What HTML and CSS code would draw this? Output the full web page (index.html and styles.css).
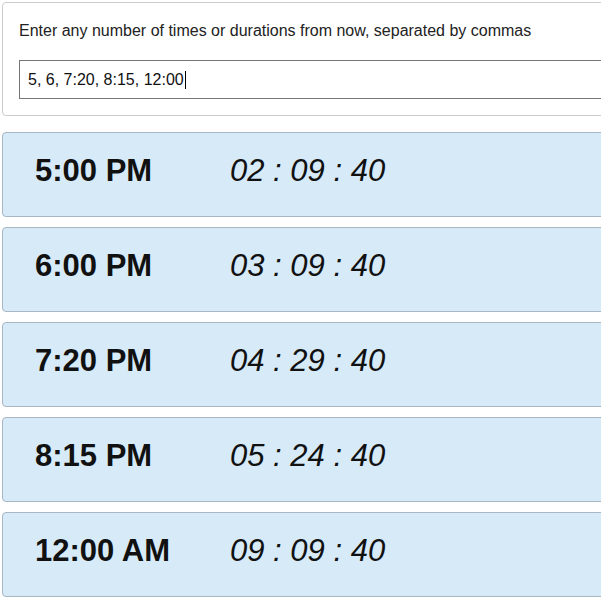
FILE: index.html
```html
<!DOCTYPE html>
<html>
<head>
<meta charset="utf-8">
<link rel="stylesheet" href="styles.css">
</head>
<body>
<div class="page">
  <div class="panel">
    <div class="label">Enter any number of times or durations from now, separated by commas</div>
    <div class="input"><span>5, 6, 7:20, 8:15, 12:00</span><span class="caret"></span></div>
  </div>
  <div class="list">
    <div class="card"><div class="time">5:00 PM</div><div class="dur">02 : 09 : 40</div></div>
    <div class="card"><div class="time">6:00 PM</div><div class="dur">03 : 09 : 40</div></div>
    <div class="card"><div class="time">7:20 PM</div><div class="dur">04 : 29 : 40</div></div>
    <div class="card"><div class="time">8:15 PM</div><div class="dur">05 : 24 : 40</div></div>
    <div class="card"><div class="time">12:00 AM</div><div class="dur">09 : 09 : 40</div></div>
  </div>
</div>
</body>
</html>
```

FILE: styles.css
```css
html, body {
  margin: 0;
  padding: 0;
  overflow: hidden;
  background: #ffffff;
}
body {
  font-family: "Liberation Sans", Arial, sans-serif;
  color: #1a1a1a;
}
.page {
  padding: 2px;
  width: 640px;
}
.panel {
  border: 1px solid #cccccc;
  border-radius: 4px;
  padding: 16px 16px 16px 16px;
}
.label {
  font-size: 16px;
  line-height: 24px;
  margin-bottom: 17px;
  color: #222;
}
.input {
  height: 39px;
  box-sizing: border-box;
  border: 1px solid #767676;
  display: flex;
  align-items: center;
  padding-left: 8px;
  font-size: 16px;
  color: #111;
  background: #fff;
}
.caret {
  display: inline-block;
  width: 1px;
  height: 18px;
  background: #000;
  margin-left: 1px;
}
.list {
  margin-top: 16px;
  display: flex;
  flex-direction: column;
  gap: 10px;
}
.card {
  height: 85px;
  box-sizing: border-box;
  background: #d6eaf8;
  border: 1px solid #a9b7c4;
  border-radius: 4px;
  display: flex;
  align-items: center;
  padding-left: 32px;
  padding-bottom: 7px;
}
.time {
  width: 195px;
  font-size: 31px;
  font-weight: bold;
  color: #111;
}
.dur {
  font-size: 31px;
  font-style: italic;
  color: #111;
}
```
